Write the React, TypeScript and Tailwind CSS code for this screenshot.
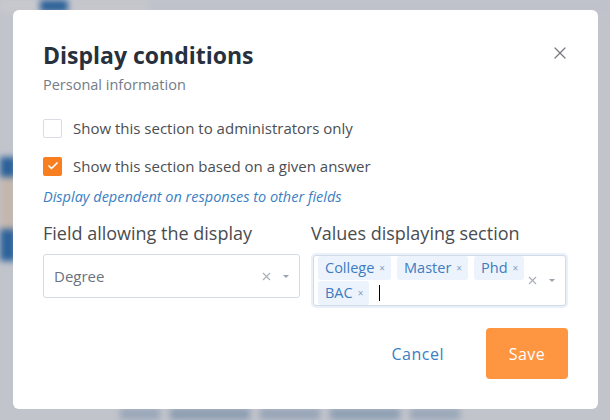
import { Check, X } from "lucide-react";

const font = { fontFamily: "'Open Sans', Lato, sans-serif" };

function Caret() {
  return (
    <svg width="8" height="5" viewBox="0 0 8 5" aria-hidden>
      <path d="M1 1l3 3 3-3z" fill="#9aa3ae" />
    </svg>
  );
}

function Tag({ label }: { label: string }) {
  return (
    <span className="flex h-[24px] items-center gap-[5px] rounded-[3px] bg-[#edf3fc] pl-[7px] pr-[6px] text-[14.5px] text-[#3d7cc0]">
      {label}
      <span className="text-[10px] text-[#7f9fc4]">×</span>
    </span>
  );
}

export default function App() {
  return (
    <div className="relative h-[420px] w-[610px] overflow-hidden bg-[#c2c4cc]" style={font}>
      {/* blurred page behind the dialog */}
      <div className="flex h-full flex-col blur-[3px]">
        <div className="flex h-[12px] w-full">
          <div className="w-[40px] bg-[#c8c9cd]" />
          <div className="w-[28px] bg-[#2c6199]" />
          <div className="w-[80px] bg-[#c6c7cc]" />
          <div className="flex-1 bg-[#bfc2cb]" />
        </div>
        <div className="mt-[145px] h-[20px] w-[16px] bg-[#2b6199]" />
        <div className="h-[52px] w-[16px] bg-[#c3b7ad]" />
        <div className="h-[32px] w-[16px] bg-[#2d629a]" />
        <div className="mt-auto flex h-[12px] gap-[10px] pl-[120px]">
          <div className="w-[40px] bg-[#9aa8b9]" />
          <div className="w-[80px] bg-[#8e9eb2]" />
          <div className="w-[60px] bg-[#98a6b8]" />
          <div className="w-[70px] bg-[#8fa0b4]" />
          <div className="w-[50px] bg-[#9aa8b9]" />
        </div>
      </div>

      <div className="absolute left-[13px] top-[10px] flex h-[399px] w-[585px] flex-col rounded-[6px] bg-white pl-[30px] pr-[30px] pt-[30px]">
        <div className="flex items-start justify-between">
          <div>
            <h2 className="text-[23px] font-bold leading-[30px] text-[#27313d]">Display conditions</h2>
            <p className="mt-[6px] text-[14.5px] leading-[18px] text-[#747c88]">Personal information</p>
          </div>
          <X className="mr-[-2px] mt-[3px] h-[20px] w-[20px] text-[#777a7e]" strokeWidth={1.5} />
        </div>

        <label className="mt-[24px] flex items-center gap-[11px] text-[15px] leading-[20px] text-[#4b4e53]">
          <span className="h-[19px] w-[19px] rounded-[2px] border border-[#d9dde3] bg-white" />
          Show this section to administrators only
        </label>
        <label className="mt-[18px] flex items-center gap-[11px] text-[15px] leading-[20px] text-[#4b4e53]">
          <span className="flex h-[19px] w-[19px] items-center justify-center rounded-[2px] bg-[#f97e1f]">
            <Check className="h-[12px] w-[12px] text-white" strokeWidth={3.5} />
          </span>
          Show this section based on a given answer
        </label>
        <p className="mt-[12px] text-[14.5px] italic leading-[18px] text-[#3a80c3]">
          Display dependent on responses to other fields
        </p>

        <div className="mt-[17px] grid grid-cols-[257px_257px] gap-[11px]">
          <div>
            <div className="text-[18px] leading-[20px] text-[#4a4c50]">Field allowing the display</div>
            <div className="mt-[11px] flex h-[44px] items-center rounded-[3px] border border-[#d3dae4] pl-[10px] pr-[9px]">
              <span className="flex-1 text-[15px] text-[#6b7380]">Degree</span>
              <X className="h-[13px] w-[13px] text-[#a7aeb7]" strokeWidth={2} />
              <span className="ml-[9px]">
                <Caret />
              </span>
            </div>
          </div>
          <div>
            <div className="text-[18px] leading-[20px] text-[#4a4c50]">Values displaying section</div>
            <div className="mt-[10px] rounded-[5px] bg-[#e8f0fb] p-[2px]">
              <div className="flex h-[51px] items-center rounded-[3px] border border-[#d3dae4] bg-white pl-[4px] pr-[9px]">
                <div className="flex w-[214px] flex-wrap gap-x-[6px] gap-y-[1px]">
                  <Tag label="College" />
                  <Tag label="Master" />
                  <Tag label="Phd" />
                  <Tag label="BAC" />
                  <span className="ml-[4px] mt-[4px] h-[16px] w-px bg-black" />
                </div>
                <div className="ml-auto flex items-center">
                  <X className="h-[13px] w-[13px] text-[#a7aeb7]" strokeWidth={2} />
                  <span className="ml-[9px]">
                    <Caret />
                  </span>
                </div>
              </div>
            </div>
          </div>
        </div>

        <div className="mt-[20px] flex items-center justify-end">
          <button className="mr-[42px] text-[16px] font-normal tracking-[0.5px] text-[#3a80c3]">Cancel</button>
          <button className="h-[51px] w-[82px] rounded-[4px] bg-[#fd9541] text-[16px] font-normal tracking-[0.5px] text-white">
            Save
          </button>
        </div>
      </div>
    </div>
  );
}
